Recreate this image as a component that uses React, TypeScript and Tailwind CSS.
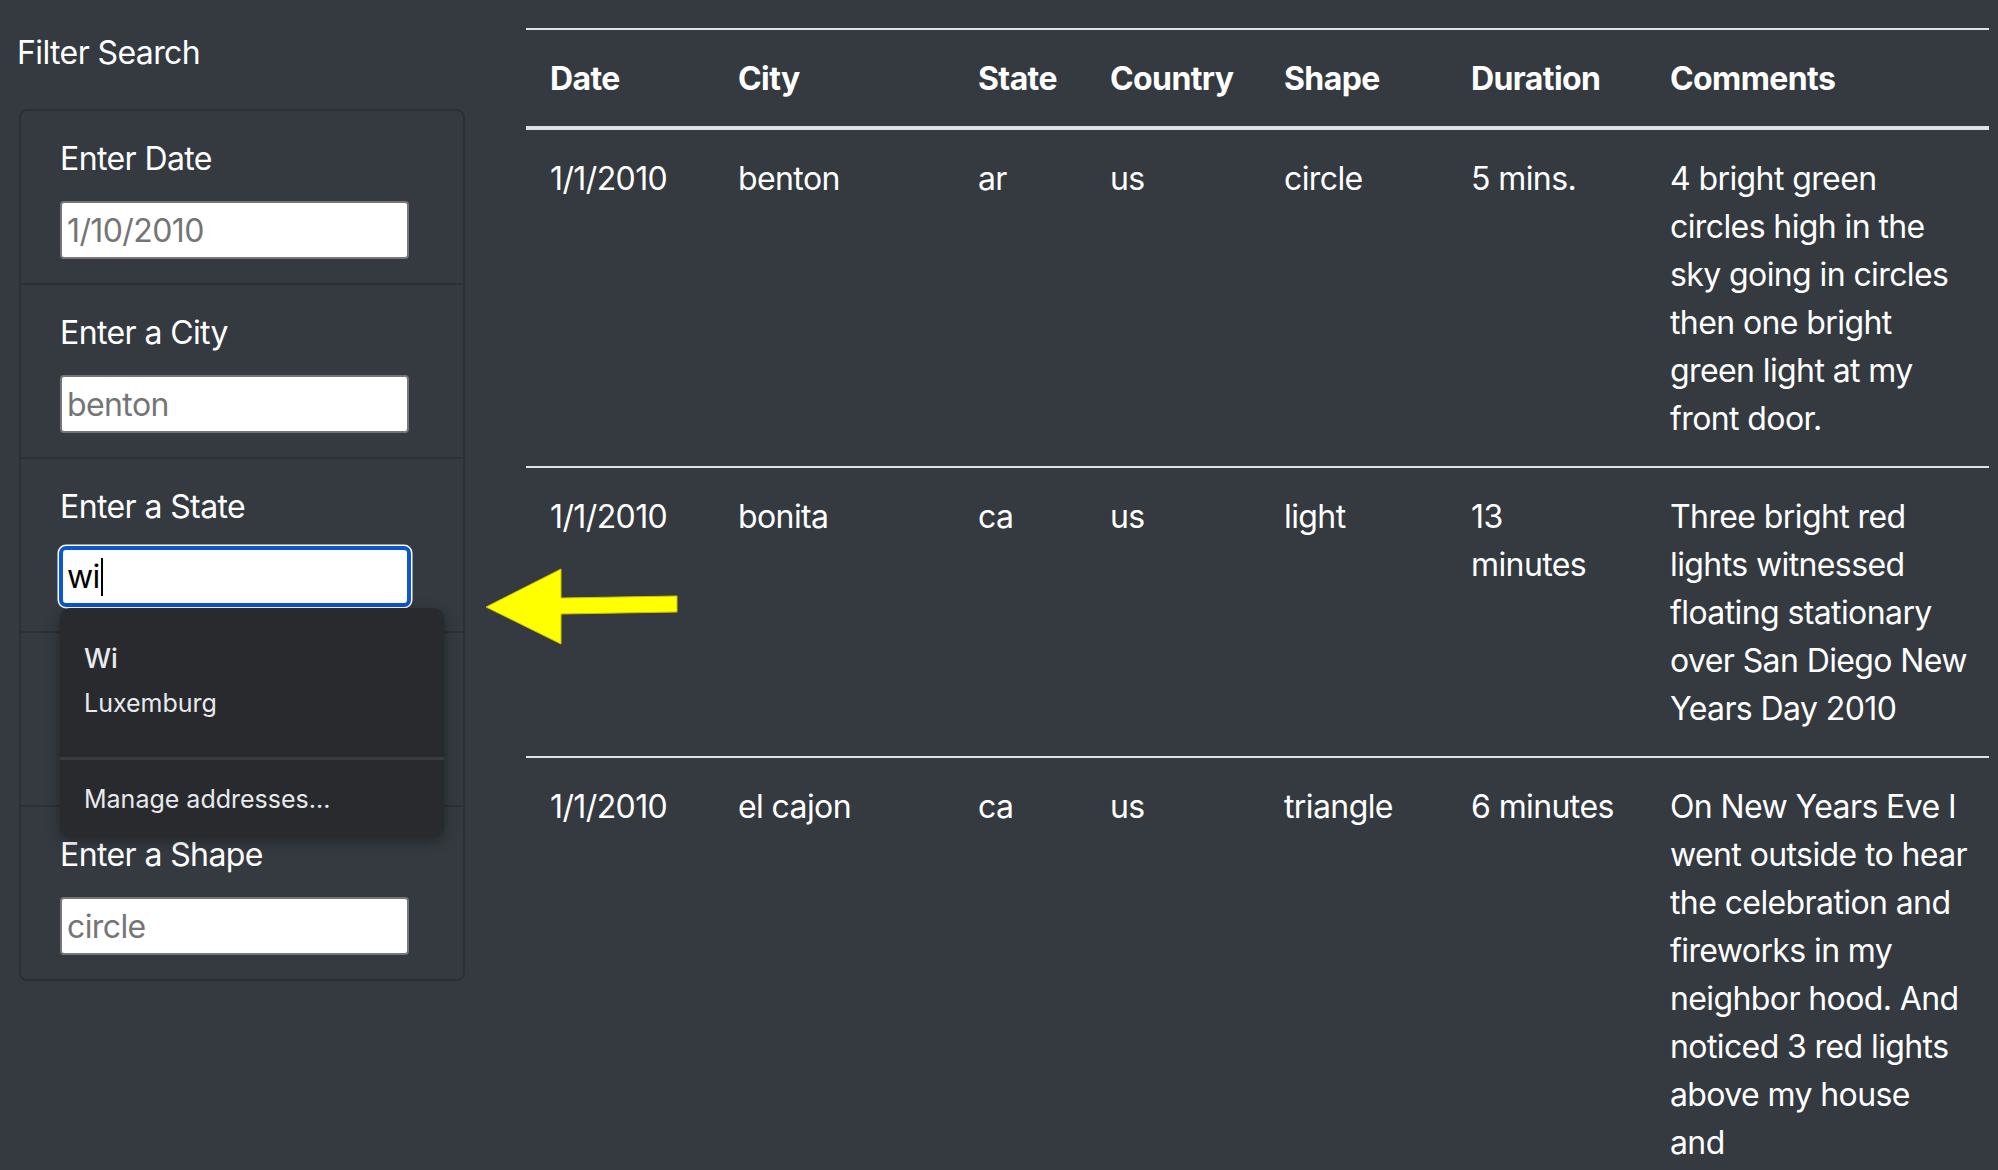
const rows = [
  {
    date: '1/1/2010',
    city: 'benton',
    state: 'ar',
    country: 'us',
    shape: 'circle',
    duration: ['5 mins.'],
    comments: ['4 bright green', 'circles high in the', 'sky going in circles', 'then one bright', 'green light at my', 'front door.'],
  },
  {
    date: '1/1/2010',
    city: 'bonita',
    state: 'ca',
    country: 'us',
    shape: 'light',
    duration: ['13', 'minutes'],
    comments: ['Three bright red', 'lights witnessed', 'floating stationary', 'over San Diego New', 'Years Day 2010'],
  },
  {
    date: '1/1/2010',
    city: 'el cajon',
    state: 'ca',
    country: 'us',
    shape: 'triangle',
    duration: ['6 minutes'],
    comments: [
      'On New Years Eve I',
      'went outside to hear',
      'the celebration and',
      'fireworks in my',
      'neighbor hood. And',
      'noticed 3 red lights',
      'above my house',
      'and',
      'they moved slowly',
      'to the east.',
    ],
  },
]

function Field({ label, placeholder, hidden }: { label: string; placeholder: string; hidden?: boolean }) {
  return (
    <li className="flex flex-col gap-[18px] border-b-2 border-[#2c3035] px-[39px] pt-[24px] pb-[24px] last:border-b-0">
      <label className={`text-[32px] leading-[48px] text-white ${hidden ? 'invisible' : ''}`}>{label}</label>
      <input
        readOnly
        placeholder={placeholder}
        className={`h-[58px] w-[349px] rounded-[4px] border-2 border-[#767676] bg-white px-[5px] text-[32px] tracking-[-0.6px] text-black placeholder:text-[#757575] outline-none ${hidden ? 'invisible' : ''}`}
      />
    </li>
  )
}

export default function App() {
  return (
    <div className="relative flex min-h-screen bg-[#343a40] font-[Inter,sans-serif] tracking-[-0.6px] text-white">
      {/* Sidebar */}
      <aside className="w-[526px] shrink-0 pl-[17px] pt-[29px]">
        <h5 className="text-[32px] leading-[48px]">Filter Search</h5>
        <div className="relative mt-[32px] ml-[2px] w-[446px] rounded-[8px] border-2 border-[#2c3035]">
          <ul>
            <Field label="Enter Date" placeholder="1/10/2010" />
            <Field label="Enter a City" placeholder="benton" />
            <li className="flex flex-col gap-[15px] border-b-2 border-[#2c3035] px-[39px] pt-[24px] pb-[24px]">
              <label className="text-[32px] leading-[48px] text-white">Enter a State</label>
              <div className="-ml-px flex h-[61px] w-[352px] items-center rounded-[7px] border-[4px] border-[#0b57d0] bg-white px-[4px] text-[32px] text-black shadow-[0_0_0_1.5px_#ffffff]">
                <span>wi</span>
                <span className="ml-px h-[38px] w-[2px] bg-black" />
              </div>
            </li>
            {/* sits under the autofill popup */}
            <Field label="Enter a Country" placeholder="us" hidden />
            <Field label="Enter a Shape" placeholder="circle" />
          </ul>

          {/* autofill popup */}
          <div className="absolute left-[39px] top-[497px] w-[384px] overflow-hidden rounded-[10px] bg-[#292a2d] tracking-normal text-[#e8eaed] shadow-[0_4px_14px_rgba(0,0,0,0.35)]">
            <div className="px-[24px] pt-[29px] pb-[32px]">
              <div className="text-[27px] font-medium leading-[44px]">Wi</div>
              <div className="text-[25px] leading-[44px]">Luxemburg</div>
            </div>
            <div className="h-[3px] bg-[#3a3b3e]" />
            <div className="px-[24px] pt-[21px] pb-[20px] text-[25px] leading-[36px]">Manage addresses...</div>
          </div>
        </div>
      </aside>

      {/* yellow arrow */}
      <svg className="absolute left-[480px] top-[560px]" width="200" height="90" viewBox="0 0 200 90">
        <polygon
          points="6,47 81,9 81,38 197,36 197,52 81,54 81,84"
          fill="#ffff00"
          stroke="#c9c400"
          strokeWidth="1"
        />
      </svg>

      {/* Table */}
      <main className="flex-1 pt-[28px] pr-[9px]">
        <table className="w-[1463px] table-fixed border-collapse text-left text-[32px] leading-[48px]">
          <colgroup>
            <col className="w-[188px]" />
            <col className="w-[240px]" />
            <col className="w-[132px]" />
            <col className="w-[174px]" />
            <col className="w-[187px]" />
            <col className="w-[199px]" />
            <col className="w-[343px]" />
          </colgroup>
          <thead>
            <tr className="border-t-2 border-b-[4px] border-[#dee2e6]">
              {['Date', 'City', 'State', 'Country', 'Shape', 'Duration', 'Comments'].map((h) => (
                <th key={h} className="px-[24px] pt-[25px] pb-[23px] align-bottom font-bold">
                  {h}
                </th>
              ))}
            </tr>
          </thead>
          <tbody>
            {rows.map((r, i) => (
              <tr key={i} className="border-t-2 border-[#dee2e6] first:border-t-0 align-top">
                <td className="px-[24px] pt-[25px] pb-[23px]">{r.date}</td>
                <td className="px-[24px] pt-[25px] pb-[23px]">{r.city}</td>
                <td className="px-[24px] pt-[25px] pb-[23px]">{r.state}</td>
                <td className="px-[24px] pt-[25px] pb-[23px]">{r.country}</td>
                <td className="px-[24px] pt-[25px] pb-[23px]">{r.shape}</td>
                <td className="px-[24px] pt-[25px] pb-[23px]">
                  {r.duration.map((l) => (
                    <div key={l} className="whitespace-nowrap">
                      {l}
                    </div>
                  ))}
                </td>
                <td className="px-[24px] pt-[25px] pb-[23px]">
                  {r.comments.map((l) => (
                    <div key={l} className="whitespace-nowrap">
                      {l}
                    </div>
                  ))}
                </td>
              </tr>
            ))}
          </tbody>
        </table>
      </main>
    </div>
  )
}
